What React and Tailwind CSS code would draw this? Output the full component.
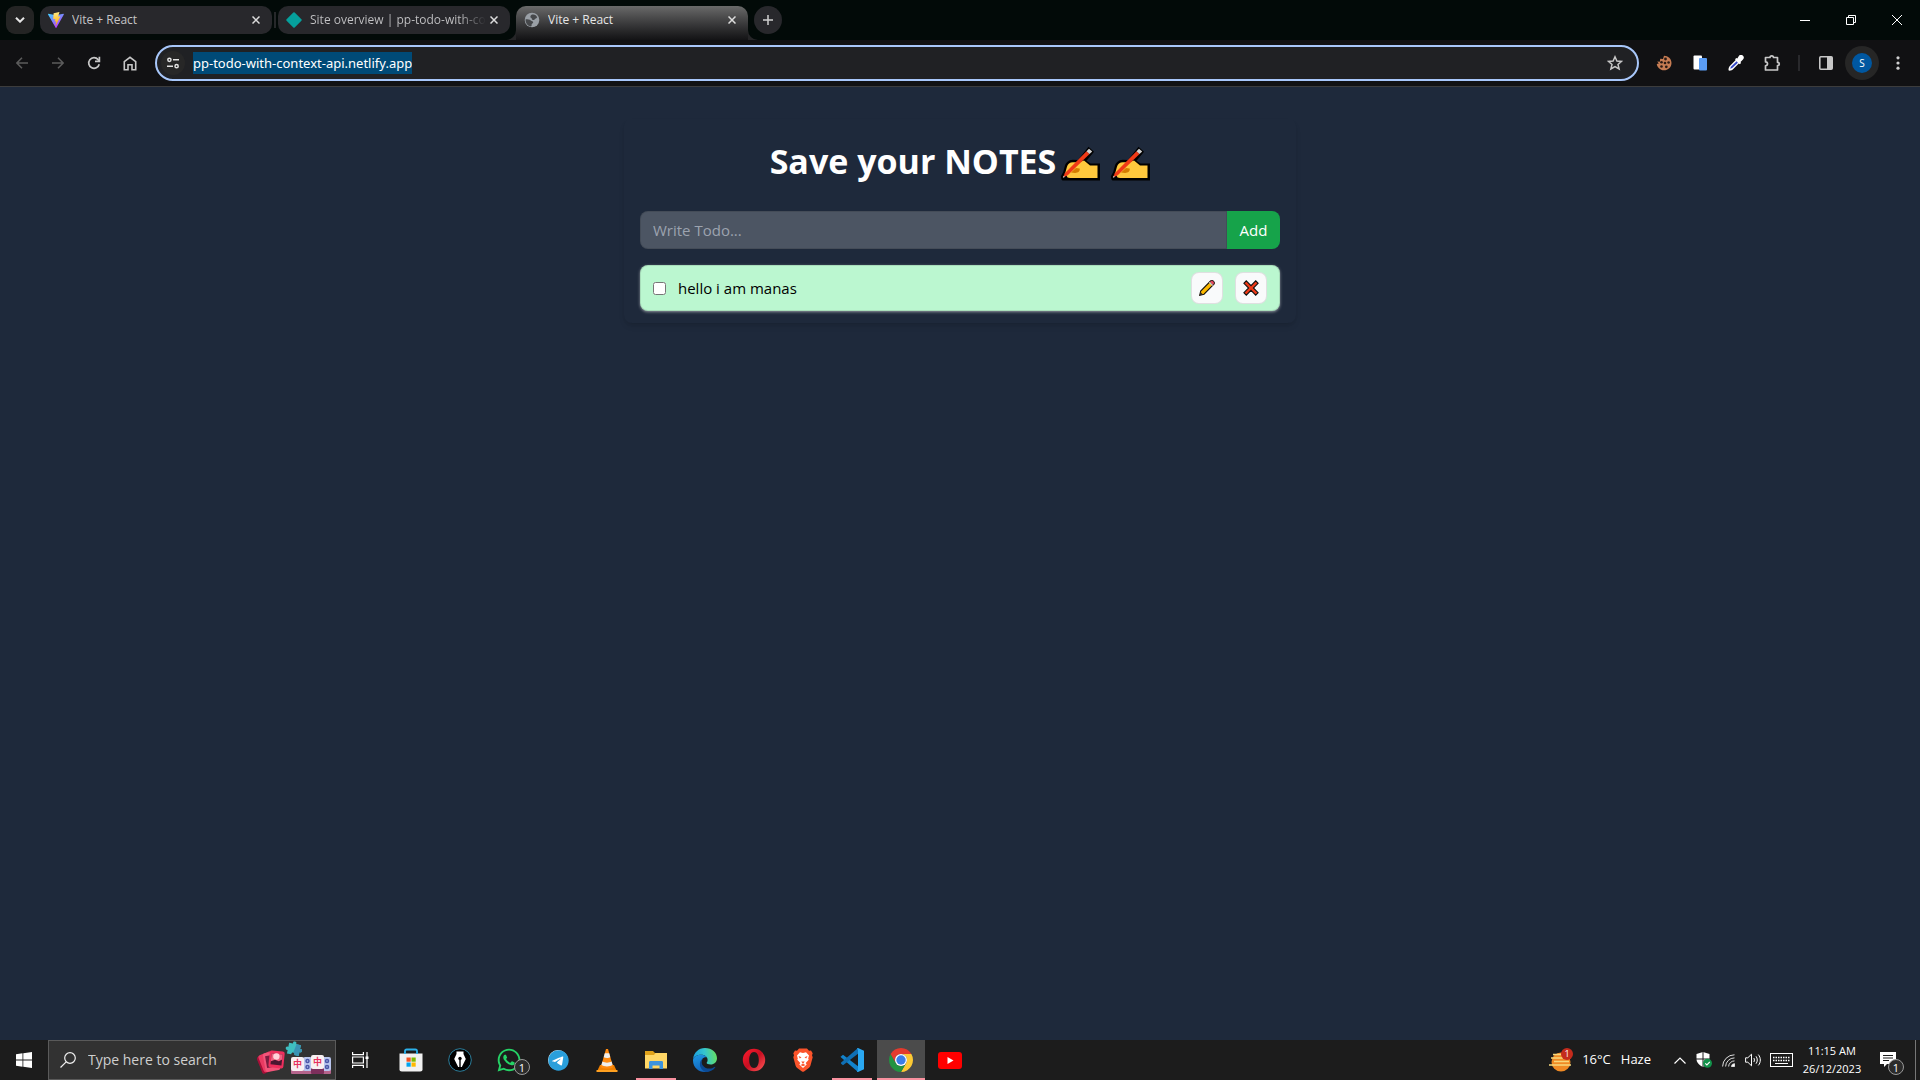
import { FaTelegram, FaWhatsapp } from "react-icons/fa6";

const ui = "font-['Open_Sans','Noto_Sans',sans-serif]";

function CloseX() {
  return (
    <svg viewBox="0 0 8 8" className="size-2" stroke="currentColor" strokeWidth="1.5">
      <path d="M.5.5l7 7M7.5.5l-7 7" />
    </svg>
  );
}

function ViteIcon() {
  return (
    <svg viewBox="0 0 32 32" className="size-4 shrink-0">
      <defs>
        <linearGradient id="va" x1="0" y1="0" x2=".6" y2="1">
          <stop offset="0" stopColor="#41d1ff" />
          <stop offset="1" stopColor="#bd34fe" />
        </linearGradient>
        <linearGradient id="vb" x1=".4" y1="0" x2=".5" y2="1">
          <stop offset="0" stopColor="#ffea83" />
          <stop offset="1" stopColor="#ffa800" />
        </linearGradient>
      </defs>
      <path d="M31.7 4.8L16.8 31.4c-.3.6-1.100.6-1.500 0L.1 4.800c-.3-.6.2-1.300.9-1.200l14.900 2.700 14.800-2.700c.8-.1 1.300.6 1 1.200z" fill="url(#va)" />
      <path d="M22.500.1l-11 2.200a.4.4 0 0 0-.3.400l-.7 11.400c0 .3.200.5.500.4l3-.7c.3 0 .6.200.5.500l-1 4.500c0 .3.200.6.500.5l1.900-.6c.3 0 .6.200.5.500l-1.400 7c-.1.400.5.700.8.300l8.800-17.700c.1-.2-.1-.6-.5-.5l-3.100.6c-.3 0-.5-.2-.5-.5l2.300-7.800c.100-.3-.1-.6-.4-.5z" fill="url(#vb)" />
    </svg>
  );
}

function GlobeIcon() {
  return (
    <svg viewBox="0 0 16 16" className="size-4 shrink-0">
      <circle cx="8" cy="8" r="7.3" fill="#9aa0a6" />
      <path d="M8.200 2.600c2.200-.6 4.300.6 5 2.600-.7 1.600-1.800 1-2.600 2.200s-2.600.8-2.800-.6-1.600-.6-1.400-2 1-1.800 1.800-2.200z" fill="#46484b" />
      <path d="M1.600 7.200c2 0 4.200.2 5.200 1.200s2.400.6 2.400 1.800-1.600 1.200-1.600 2.400.2 1.400-.6 2C3.500 14 1.300 10.800 1.600 7.200z" fill="#46484b" />
    </svg>
  );
}

function Tab({ title, icon, active, fade }) {
  return (
    <div
      className={
        active
          ? "relative flex h-[34px] w-[232px] items-start rounded-t-[10px] bg-gradient-to-b from-[#6a6a6a] to-[#131315] px-2 text-[#e6e6e6]"
          : "relative flex h-7 w-[232px] items-start rounded-[10px] bg-[#28282c] px-2 text-[#c4c4c6]"
      }
    >
      {active && (
        <>
          <svg viewBox="0 0 10 10" className="absolute bottom-0 -left-[10px] size-[10px]"><path d="M0 10A10 10 0 0 0 10 0V10z" fill="#252527" /></svg>
          <svg viewBox="0 0 10 10" className="absolute -right-[10px] bottom-0 size-[10px]"><path d="M10 10A10 10 0 0 1 0 0V10z" fill="#252527" /></svg>
        </>
      )}
      <div className="flex h-7 w-full items-center">
        {icon}
        <span className={fade ? "ml-2 min-w-0 flex-1 overflow-hidden bg-gradient-to-r from-[#c4c4c6] from-85% to-[#28282c] bg-clip-text text-xs leading-5 whitespace-nowrap text-transparent" : "ml-2 min-w-0 flex-1 overflow-hidden text-xs leading-5 whitespace-nowrap"}>{title}</span>
        <button aria-label="Close tab" className="flex size-4 items-center justify-center text-[#dcdcdc]"><CloseX /></button>
      </div>
    </div>
  );
}

function IconButton({ label, children }) {
  return (
    <button aria-label={label} className="flex h-9 w-9 shrink-0 items-center justify-center">
      {children}
    </button>
  );
}

function TabStrip() {
  return (
    <header className="flex h-10 items-start bg-[#020a08] pl-1.5">
      <button aria-label="Search tabs" className="mt-1.5 mr-1.5 flex size-7 items-center justify-center rounded-[9px] bg-[#242424]">
        <svg viewBox="0 0 10 6" className="h-1.5 w-2.5" fill="none" stroke="#e6e6e6" strokeWidth="2"><path d="M1 .7l4 4 4-4" /></svg>
      </button>
      <nav className="mt-1.5 flex items-start">
        <Tab title="Vite + React" icon={<ViteIcon />} />
        <span className="mx-0.5 mt-1.5 h-4 w-0.5 bg-[#26282a]" />
        <Tab
          title="Site overview | pp-todo-with-co"
          fade
          icon={<svg viewBox="0 0 16 16" className="size-4 shrink-0"><path d="M7.300.6a1 1 0 0 1 1.400 0l6.700 6.700a1 1 0 0 1 0 1.400l-6.700 6.700a1 1 0 0 1-1.400 0L.6 8.700a1 1 0 0 1 0-1.400z" fill="#05a09c" /></svg>}
        />
        <span className="w-1.5" />
        <Tab title="Vite + React" icon={<GlobeIcon />} active />
      </nav>
      <button aria-label="New tab" className="mt-1.5 ml-1.5 flex size-7 items-center justify-center rounded-full bg-[#28282c]">
        <svg viewBox="0 0 10 10" className="size-2.5" stroke="#cfcfcf" strokeWidth="1.500"><path d="M5 0v10M0 5h10" /></svg>
      </button>
      <div className="ml-auto flex h-10 text-white">
        <button aria-label="Minimize" className="flex w-[46px] items-center justify-center">
          <svg viewBox="0 0 10 10" className="size-2.5" stroke="currentColor"><path d="M0 5.500h10" /></svg>
        </button>
        <button aria-label="Restore" className="flex w-[46px] items-center justify-center">
          <svg viewBox="0 0 10 10" className="size-2.5" fill="none" stroke="currentColor"><path d="M.5 2.500h7v7h-7zM2.500 2.500v-2h7v7h-2" /></svg>
        </button>
        <button aria-label="Close" className="flex w-[46px] items-center justify-center">
          <svg viewBox="0 0 10 10" className="size-2.5" stroke="currentColor"><path d="M0 0l10 10M10 0L0 10" /></svg>
        </button>
      </div>
    </header>
  );
}

function Toolbar() {
  return (
    <div className="flex h-[47px] items-center border-b border-[#3c3c3c] bg-[#111113] pr-1 pl-1">
      <IconButton label="Back">
        <svg viewBox="0 0 12 12" className="size-3" fill="none" stroke="#5c5c5c" strokeWidth="1.500"><path d="M12 6H1M6 .8L.9 6 6 11.200" /></svg>
      </IconButton>
      <IconButton label="Forward">
        <svg viewBox="0 0 12 12" className="size-3" fill="none" stroke="#5c5c5c" strokeWidth="1.500"><path d="M0 6h11M6 .8L11.100 6 6 11.200" /></svg>
      </IconButton>
      <IconButton label="Reload">
        <svg viewBox="0 0 14 14" className="size-3.5" fill="none" stroke="#c7c7c7" strokeWidth="1.700"><path d="M12.200 8.200A5.300 5.300 0 1 1 11.100 3.600L12.500 5" /><path d="M12.400.8V5.300H8" /></svg>
      </IconButton>
      <IconButton label="Home">
        <svg viewBox="0 0 14 15" className="h-[15px] w-3.5" fill="none" stroke="#c7c7c7" strokeWidth="1.600"><path d="M1.300 13.700V5.600L7 1.300l5.700 4.300v8.100H9V8.800H5v4.900z" /></svg>
      </IconButton>
      <div className="ml-[7px] flex h-9 flex-1 items-center rounded-full border-2 border-[#a8c7fa] bg-[#202124] pl-1">
        <button aria-label="View site information" className="flex size-6 items-center justify-center rounded-full bg-[#272727]">
          <svg viewBox="0 0 12 12" className="size-3" fill="none" stroke="#e3e3e3" strokeWidth="1.500"><circle cx="2.400" cy="2.800" r="1.600" /><path d="M6 2.800h6M0 9.200h6" /><circle cx="9.600" cy="9.200" r="1.600" /></svg>
        </button>
        <div className="flex flex-1 pl-2">
          <input aria-label="Address" readOnly defaultValue="pp-todo-with-context-api.netlify.app" className="field-sizing-content h-[22px] bg-[#004a77] font-['Noto_Sans','Open_Sans',sans-serif] text-[13px] leading-[22px] text-white outline-none" />
        </div>
        <button aria-label="Bookmark this tab" className="mr-[14px] flex size-4 items-center justify-center">
          <svg viewBox="0 0 16 16" className="size-4" fill="none" stroke="#c7c7c7" strokeWidth="1.500"><path d="M8 1.800l1.900 4.200 4.600.4-3.500 3 1.100 4.500L8 11.500l-4.100 2.400L5 9.400 1.500 6.400l4.600-.4z" /></svg>
        </button>
      </div>
      <div className="ml-[7px] flex items-center">
        <IconButton label="Cookie editor">
          <svg viewBox="0 0 16 16" className="size-4"><path d="M8 .7c4 0 7.500 3 7.500 7.300S12 15.300 8 15.300 1 12 .8 9l2-.4L1.200 6.400l2.600.3.400-3L7 4z" fill="#c67c53" /><g fill="#2a1a14"><circle cx="9.500" cy="4" r="1.400" /><circle cx="5.500" cy="7.300" r="1.300" /><circle cx="9" cy="8" r="1.300" /><circle cx="12.600" cy="7.500" r="1.300" /><circle cx="5.500" cy="11.500" r="1.300" /><circle cx="10.300" cy="11.800" r="1.400" /></g></svg>
        </IconButton>
        <IconButton label="Copy extension">
          <svg viewBox="0 0 14 16" className="h-4 w-3.5"><rect x=".5" y=".5" width="8.500" height="14" rx="1" fill="#fff" /><rect x="6" y="3" width="8" height="12.500" rx="1" fill="#5b9df5" /></svg>
        </IconButton>
        <IconButton label="Color picker">
          <svg viewBox="0 0 16 16" className="size-4"><path d="M11 .8a2.500 2.500 0 0 1 4 3.600L12.500 7l.6 1-1.400 1.300-.9-.7-6.300 6.100c-.8.700-3.700 1.400-3.900.6-.3-.8.200-3.300 1-4.100l6.100-6.100L7 4.200l1.300-1.300 1 .5z" fill="#fff" /><path d="M8.600 6.300l1.300 1.400L4.200 13l-2 .7.700-2z" fill="#3347c8" /></svg>
        </IconButton>
        <IconButton label="Extensions">
          <svg viewBox="0 0 18 18" className="size-[18px]" fill="none" stroke="#c7c7c7" strokeWidth="1.700"><path d="M2.500 3.500H7c0-2.300 3.500-2.300 3.500 0h4v4.800c2.400 0 2.400 3.200 0 3.200v4.500h-12v-4.200c2.700-.3 2.700-3.600 0-3.900z" strokeLinejoin="round" /></svg>
        </IconButton>
        <span className="mx-2 h-4 w-0.5 bg-[#29292c]" />
        <IconButton label="Side panel">
          <svg viewBox="0 0 14 14" className="size-3.5"><rect x=".8" y=".8" width="12.400" height="12.400" rx="1" fill="none" stroke="#c7c7c7" strokeWidth="1.600" /><path d="M8 1h5v12H8z" fill="#c7c7c7" /></svg>
        </IconButton>
        <IconButton label="Profile">
          <span className="flex size-[34px] shrink-0 items-center justify-center rounded-full bg-[#262626]">
            <span className="flex size-5 items-center justify-center rounded-full bg-[#0057a0] text-[10px] text-white">S</span>
          </span>
        </IconButton>
        <IconButton label="Menu">
          <svg viewBox="0 0 4 14" className="h-3.5 w-1" fill="#d0d0d0"><circle cx="2" cy="1.800" r="1.600" /><circle cx="2" cy="7" r="1.600" /><circle cx="2" cy="12.200" r="1.600" /></svg>
        </IconButton>
      </div>
    </div>
  );
}

function WritingHand() {
  return (
    <svg viewBox="0 0 40 35" className="h-[35px] w-10" role="img" aria-label="writing hand">
      <path d="M1.500 33.500L.8 30.500 3.200 26l1.500-5.500c1-4 4-6.500 8-6.700l5.300.2L28.500.8 34 5.800l-7.500 9 4 2.700H40v17H2.500z" fill="#000" />
      <path d="M7.500 31.500L5.200 27l1.700-6c.7-3 3-4.700 6-4.700h6L24 14.500l6 5h7.500V32H10z" fill="#ffc83d" />
      <path d="M11 26.500l5-4.500 3.700.6c.5 2.600-1.500 4.400-4.700 4.400z" fill="#d67d00" />
      <path d="M3 31.500l1.800-4.300L26.500 5.300l3 2.800L7.700 29.300z" fill="#f03a17" />
      <path d="M26.500 5.300l2.500-2.500 3.200 2.700-2.700 2.600z" fill="#d2d2d2" />
      <path d="M2.800 31.700l.8-2 1.400 1.200z" fill="#ccc" />
    </svg>
  );
}

function Pencil() {
  return (
    <svg viewBox="0 0 16 16" className="size-4">
      <path d="M.7 15.300l1-4.300L11.600 1c1.900-1.500 4.600 1.300 3.300 3.200L5 14.200z" fill="#fdb900" stroke="#17120c" strokeWidth="1.100" />
      <path d="M10.600 2l1-1c1.900-1.500 4.600 1.300 3.300 3.200l-1 1z" fill="#e8495f" stroke="#222" strokeWidth=".7" />
      <path d="M9.900 2.700l.9-.9L14 5l-.9.900z" fill="#c9c9c9" />
      <path d="M.7 15.300l.8-3.300 2.500 2.500z" fill="#332c26" />
    </svg>
  );
}

function Cross() {
  return (
    <svg viewBox="0 0 16 16" className="size-4">
      <path d="M3.300.9L8 5.600 12.700.9l2.400 2.400L10.400 8l4.700 4.700-2.400 2.400L8 10.400l-4.700 4.700-2.400-2.400L5.600 8 .9 3.300z" fill="#f03a17" stroke="#101010" strokeWidth="1.100" />
    </svg>
  );
}

function TodoPage() {
  return (
    <main className="flex-1 bg-[#1e293b] py-8">
      <section className="mx-auto w-full max-w-2xl rounded-lg px-4 py-3 shadow-md">
        <h1 className="mt-2 mb-8 flex h-10 items-center justify-center pt-1 text-[34px] leading-10 font-bold text-white">
          <span className="mr-1">Save your NOTES</span>
          <span className="flex gap-[10px] pt-1"><WritingHand /><WritingHand /></span>
        </h1>
        <form className="mb-4 flex" onSubmit={(e) => e.preventDefault()}>
          <input aria-label="Todo" placeholder="Write Todo..." className="min-w-0 flex-1 rounded-l-lg border border-black/10 bg-[#4c5563] px-3 py-1.5 text-[15px] leading-6 outline-none placeholder:text-[#9ca3af]" />
          <button className="w-[53px] rounded-r-lg bg-[#16a34a] text-[15px] text-white">Add</button>
        </form>
        <div className="flex items-center gap-3 rounded-lg border border-black/10 bg-[#bbf7d0] px-3 py-1.5 shadow-[0_1px_3px_rgba(255,255,255,0.5)]">
          <input id="todo-1" type="checkbox" />
          <label htmlFor="todo-1" className="flex-1 text-[15px] leading-6 text-black">hello i am manas</label>
          <button aria-label="Edit" className="flex size-8 items-center justify-center rounded-lg border border-black/10 bg-gray-50"><Pencil /></button>
          <button aria-label="Delete" className="flex size-8 items-center justify-center rounded-lg border border-black/10 bg-gray-50"><Cross /></button>
        </div>
      </section>
    </main>
  );
}

function TaskButton({ label, state, children }) {
  return (
    <button aria-label={label} className={state === "active" ? "relative flex h-10 w-12 items-center justify-center bg-[#4b4b4b]" : "relative flex h-10 w-12 items-center justify-center"}>
      {children}
      {state === "active" && <span className="absolute inset-x-0 bottom-0 h-0.5 bg-[#f8919f]" />}
      {state === "open" && <span className="absolute inset-x-1 bottom-0 h-0.5 bg-[#f8919f]" />}
    </button>
  );
}

function SearchArt() {
  return (
    <svg viewBox="0 0 76 38" className="h-[38px] w-[76px] shrink-0">
      <g transform="rotate(-22 10 22)"><rect x="2" y="13" width="14" height="18" rx="2" fill="#a80f38" /><rect x="4" y="12" width="14" height="18" rx="2" fill="#e93a62" /></g>
      <g transform="rotate(-10 15 20)"><rect x="7" y="11" width="15" height="19" rx="2" fill="#f2557a" /><rect x="9" y="14" width="10" height="12" fill="#7a1c40" /></g>
      <g transform="rotate(6 20 19)"><rect x="12" y="10" width="15" height="17" rx="2" fill="#ee2f5d" /><path d="M14 13h11v11H14z" fill="#4b1631" /><path d="M14 13h11v5l-3 2-4-1-4 2z" fill="#f0607f" /><circle cx="19" cy="15.500" r="3.200" fill="#ffd2da" /></g>
      <g transform="rotate(12 38 8)"><path d="M31 3h4c-1.500-3 4.500-3 3 0h5v4c3-1.500 3 4.500 0 3v4h-4.500c1-3-4-3-3 0H31v-3.500c-3 1-3-4.500 0-3z" fill="#3fbfc0" /><path d="M38.500 3H43v4c3-1.500 3 4.500 0 3v4h-4.500c.4-1.400-.5-2.200-1.500-2.300z" fill="#3a93b4" /></g>
      <rect x="34" y="27" width="40" height="6" rx="1" fill="#b5648c" />
      <rect x="46" y="16" width="9" height="14" rx="2" fill="#b9c5ee" /><rect x="65" y="16" width="9" height="14" rx="2" fill="#b9c5ee" />
      <g fill="none" stroke="#4a56a8" strokeWidth="1.500"><circle cx="50.500" cy="20" r="1.500" /><circle cx="50.500" cy="26" r="1.500" /><circle cx="70" cy="20" r="1.500" /><circle cx="70" cy="26" r="1.500" /></g>
      <rect x="34" y="16" width="13" height="14" rx="2" fill="#f8f0f2" />
      <rect x="54" y="27" width="13" height="6" rx="1" fill="#7d2f5c" /><rect x="54" y="14" width="13" height="14" rx="2" fill="#f8f0f2" />
      <g fontFamily="Noto Sans CJK SC, sans-serif" fontSize="9" fontWeight="700" fill="#e5315c" textAnchor="middle"><text x="40.500" y="26">中</text><text x="60.500" y="24">中</text></g>
    </svg>
  );
}

function ChromeLogo() {
  const d = "M12 6H22.390A12 12 0 0 1 12 24L17.200 15A6 6 0 0 0 12 6Z";
  return (
    <svg viewBox="0 0 24 24" className="size-6">
      <path d={d} fill="#fcc934" />
      <path d={d} fill="#229342" transform="rotate(120 12 12)" />
      <path d={d} fill="#e33b2e" transform="rotate(240 12 12)" />
      <circle cx="12" cy="12" r="6" fill="#fff" />
      <circle cx="12" cy="12" r="4.700" fill="#3a7de8" />
    </svg>
  );
}

function EdgeLogo() {
  return (
    <svg viewBox="0 0 24 24" className="size-6">
      <defs>
        <linearGradient id="edge-top" x1="0" y1=".5" x2="1" y2=".4">
          <stop offset="0" stopColor="#1a9fe0" />
          <stop offset=".5" stopColor="#35c5cf" />
          <stop offset="1" stopColor="#66e05f" />
        </linearGradient>
        <linearGradient id="edge-left" x1=".3" y1="0" x2=".6" y2="1">
          <stop offset="0" stopColor="#1c95e2" />
          <stop offset="1" stopColor="#1262b8" />
        </linearGradient>
      </defs>
      <path d="M.1 11C.6 4.800 5.600 0 12 0c7 0 12 4.800 12 10.200 0 3.800-2.900 6.300-6.300 6.300-2.500 0-4.100-.8-4.100-1.700 0-.6 1-1 1-2.900 0-3-2.800-5.200-6.300-5.200C4.200 6.700 1 8.500.1 11z" fill="url(#edge-top)" />
      <path d="M.1 11.300C1 8.400 4.300 6.700 8.300 6.700c2.400 0 4.500 1 5.500 2.700-2.800-.4-5.600 1.400-5.600 5.400 0 4.200 3.300 8 7.600 8.400C8.500 26 0 21 0 12.500z" fill="url(#edge-left)" />
      <path d="M10.100 10.800c-2.900 2.500-1.600 8.200 4.200 9.600 3 .7 5.500-.5 7.300-1.500.5-.3.900.2.600.6C20.200 22.400 16.500 24 13 24c-4-1.300-6.300-4.700-6.100-8.300.1-2.500 1.300-4.100 3.200-4.900z" fill="#0b4a94" />
    </svg>
  );
}

function Badge() {
  return <span className="flex size-4 items-center justify-center rounded-full border border-[#9a9a9a] bg-[#2b2b2b] text-[11px] leading-none text-white">1</span>;
}

function Taskbar() {
  return (
    <footer className="flex h-10 bg-[#1c1c1c] text-white">
      <button aria-label="Start" className="flex h-10 w-12 items-center justify-center">
        <svg viewBox="0 0 16 16" className="size-4" fill="#fff"><path d="M0 2.200L6.500 1.300V7.600H0zM7.300 1.200L16 0v7.600H7.300zM0 8.400h6.500v6.300L0 13.800zM7.300 8.400H16V16l-8.700-1.200z" /></svg>
      </button>
      <label className="flex h-10 w-[288px] items-center border border-[#5a5a5a] bg-[#323232] pr-0.5 pl-[11px]">
        <svg viewBox="0 0 16 16" className="size-4 shrink-0" fill="none" stroke="#f0f0f0" strokeWidth="1.200"><circle cx="10" cy="6" r="5.300" /><path d="M6.200 9.800L.5 15.500" /></svg>
        <input aria-label="Search" placeholder="Type here to search" className="ml-3 min-w-0 flex-1 bg-transparent text-sm outline-none placeholder:text-[#cfcfcf]" />
        <SearchArt />
      </label>
      <div className="mr-[3px] flex">
        <TaskButton label="Task view">
          <svg viewBox="0 0 17 16" className="h-4 w-[17px]" fill="none" stroke="#fff" strokeWidth="1.200"><path d="M.6 0v2.600h10.800V0M.6 16v-2.600h10.800V16M.6 5h10.800v6H.6zM15 0v16" /><path d="M13.500 4.500h3v2.500h-3z" fill="#fff" stroke="none" /></svg>
        </TaskButton>
      </div>
      <div className="flex gap-px">
        <TaskButton label="Microsoft Store">
          <svg viewBox="0 0 24 24" className="size-6"><path d="M.5 5.500h23v15.700c0 1.300-.8 2.300-2.300 2.300H2.800C1.300 23.500.5 22.500.5 21.200z" fill="#f1f1f1" /><path d="M7.500 9.500h4.200v4.200H7.500z" fill="#f25022" /><path d="M12.500 9.500h4.200v4.200h-4.200z" fill="#7fba00" /><path d="M7.500 14.500h4.200v4.200H7.500z" fill="#00a4ef" /><path d="M12.500 14.500h4.200v4.200h-4.200z" fill="#ffb900" /><path d="M6 6V3.200c0-1 .6-1.700 1.600-1.700h8.800c1 0 1.600.7 1.600 1.700V6" fill="none" stroke="#2cb1ea" strokeWidth="1.800" /></svg>
        </TaskButton>
        <TaskButton label="Pen app">
          <svg viewBox="0 0 24 24" className="size-6"><circle cx="12" cy="12" r="11.300" fill="#000" stroke="#2e7f9c" /><path d="M8.500 3.500h7v2.500l2.300 5L13.800 19h-3.600L6.200 11l2.300-5z" fill="#fff" /><path d="M12 19v-7" stroke="#000" strokeWidth="1.400" /><circle cx="12" cy="10.500" r="1.700" fill="#000" /></svg>
        </TaskButton>
        <TaskButton label="WhatsApp">
          <FaWhatsapp className="size-[26px] text-[#25d366]" />
          <span className="absolute top-[19px] right-[3px]"><Badge /></span>
        </TaskButton>
        <TaskButton label="Telegram">
          <span className="flex size-5 items-center justify-center rounded-full bg-white"><FaTelegram className="size-[21px] shrink-0 text-[#2a9fdb]" /></span>
        </TaskButton>
        <TaskButton label="VLC media player">
          <svg viewBox="0 0 22 24" className="h-6 w-[22px]"><path d="M4 17h14l2.800 6.300H1.200z" fill="#f08000" /><path d="M10 1h2l5.200 18c-2 2-10.400 2-12.400 0z" fill="#ff8a10" /><path d="M8.800 5.200h4.400l1.100 4c-1.500 1-5 1-6.600 0zM6.400 13.500c2.500 1.500 6.700 1.500 9.200 0l1 3.600c-2.600 1.700-8.600 1.700-11.200 0z" fill="#eee" /><path d="M.5 22h21v2H.5z" fill="#ffa020" /></svg>
        </TaskButton>
        <TaskButton label="File Explorer" state="open">
          <svg viewBox="0 0 22 20" className="h-5 w-[22px]"><path d="M0 1h8l2 2h12v15H0z" fill="#e0a21a" /><path d="M0 5h9l1.500-2H22v15.500H0z" fill="#ffd766" /><path d="M4 19v-6.500c0-1 .5-1.500 1.500-1.500h11c1 0 1.500.5 1.500 1.500V19h-3.500v-3.500h-7V19z" fill="#3d93dc" /></svg>
        </TaskButton>
        <TaskButton label="Microsoft Edge"><EdgeLogo /></TaskButton>
        <TaskButton label="Opera">
          <svg viewBox="0 0 24 24" className="size-6"><defs><linearGradient id="op" x1="0" y1="0" x2="1" y2="1"><stop offset="0" stopColor="#ff1b2d" /><stop offset=".5" stopColor="#c80f22" /><stop offset="1" stopColor="#ff5a5a" /></linearGradient></defs><path fillRule="evenodd" d="M12 .8a11.200 11.200 0 1 1 0 22.400A11.200 11.200 0 0 1 12 .8zM12 4C9 4 7.200 7.500 7.200 12S9 20 12 20s4.800-3.500 4.800-8S15 4 12 4z" fill="url(#op)" /></svg>
        </TaskButton>
        <TaskButton label="Brave">
          <svg viewBox="0 0 20 24" className="h-6 w-5"><path d="M6 .5h8l2 2.200 2-.2 1.700 2.700-.7 2 .7 2-2.300 8.500c-.3 1-.8 1.700-1.600 2.300L11 23.500c-.6.400-1.400.4-2 0L4.200 20c-.8-.6-1.300-1.300-1.600-2.300L.3 9.200l.7-2-.7-2L2 2.500l2 .2z" fill="#fb542b" /><path d="M10 5l3-.7 3 3.200-.8 3 .5 1.200-3 3.200 1 1.700L10 20l-3.700-3.400 1-1.700-3-3.200.5-1.200-.8-3L7 4.300z" fill="#fff" /><path d="M5.500 8l3 1.200-1.700 1.300zM14.500 8l-3 1.200 1.700 1.300zM8.300 13.500h3.400L10 16zM7.500 17l2.500-1.300 2.500 1.300L10 18.200z" fill="#fb542b" /></svg>
        </TaskButton>
        <TaskButton label="Visual Studio Code" state="open">
          <svg viewBox="0 0 24 24" className="size-6"><path d="M1.200 8.300L3 6.700l15 11.500V24L.9 9.200z" fill="#1283cc" /><path d="M1.200 15.700L3 17.300 18 5.800V0L.9 14.800z" fill="#0f6fb4" /><path d="M17 .2L18 0l6 2.800v18.400L18 24l-1.200-.3L18 22V2z" fill="#2aa8f2" /></svg>
        </TaskButton>
        <TaskButton label="Google Chrome" state="active"><ChromeLogo /></TaskButton>
        <TaskButton label="YouTube">
          <svg viewBox="0 0 24 17" className="h-[17px] w-6"><rect width="24" height="17" rx="3" fill="#f00" /><path d="M9.500 5l6 3.500-6 3.500z" fill="#fff" /></svg>
        </TaskButton>
      </div>
      <div className="ml-auto flex items-center">
        <button className="flex items-center text-[13px]">
          <svg viewBox="0 0 26 24" className="mr-2 h-6 w-[26px]"><circle cx="13" cy="14" r="9.500" fill="#f08a24" /><path d="M5 6.500h8M3 10h12M6 13.500h15M1 17h22" stroke="#f7d77b" strokeWidth="1.700" /><circle cx="19" cy="6" r="6" fill="#c42b1c" /><text x="19" y="9" fontSize="9" fill="#fff" textAnchor="middle">1</text></svg>
          <span className="mr-[10px]">16°C</span><span>Haze</span>
        </button>
        <div className="ml-[23px] flex items-center gap-[10px]">
          <button aria-label="Show hidden icons"><svg viewBox="0 0 12 7" className="h-[7px] w-3" fill="none" stroke="#fff" strokeWidth="1.200"><path d="M.5 6.500L6 1l5.500 5.500" /></svg></button>
          <svg viewBox="0 0 16 16" className="size-4"><path d="M7 0l6.500 2v5c0 3.500-2.500 6-6.500 8C3 13 .5 10.500.5 7V2z" fill="#fff" /><path d="M7 0v15M0 7h14" stroke="#1c1c1c" strokeWidth="1" /><circle cx="11.500" cy="11.300" r="4.500" fill="#12924a" /><path d="M9.300 11.300l1.600 1.600 2.900-3" stroke="#fff" fill="none" strokeWidth="1.100" /></svg>
          <svg viewBox="0 0 13 13" className="size-[13px]" fill="none" stroke="#dcdcdc"><path d="M.6 12.500A11.900 11.900 0 0 1 12.500.8M3.600 12.500A8.900 8.900 0 0 1 12.500 3.900M6.600 12.500a5.900 5.900 0 0 1 5.900-5.600" /><path d="M9.500 12.500a3 3 0 0 1 3-2.800v2.800z" fill="#fff" /></svg>
          <svg viewBox="0 0 17 14" className="h-3.5 w-[17px]" fill="none" stroke="#fff"><path d="M.6 4.800h2.200L6.500 1.200v11.600L2.800 9.200H.6z" /><path d="M8.800 5c.8 1.100.8 2.900 0 4M11 3.300c1.700 2 1.700 5.400 0 7.400M13.300 1.600c2.700 3 2.700 7.800 0 10.800" /></svg>
          <svg viewBox="0 0 23 14" className="-ml-0.5 h-3.5 w-[23px]" fill="none" stroke="#fff"><rect x=".5" y=".5" width="22" height="13" /><path d="M3 4.500h17M3 7.500h17" strokeDasharray="1.500 1" strokeWidth="1.300" /><path d="M5 10.500h13" /></svg>
        </div>
        <div className="ml-[9px] w-[60px] text-center text-[11px] leading-[18px] whitespace-nowrap">
          <div>11:15 AM</div>
          <div>26/12/2023</div>
        </div>
        <button aria-label="Notifications" className="relative ml-4 h-10 w-[37px]">
          <svg viewBox="0 0 16 15" className="absolute top-3 left-0.5 h-[15px] w-4"><path d="M0 0h16v12H7l-3 3v-3H0z" fill="#fff" /><path d="M3 3.500h10M3 6h10M3 8.500h6" stroke="#1c1c1c" /></svg>
          <span className="absolute top-[19px] left-[10px]"><Badge /></span>
        </button>
        <span className="mr-1 h-10 w-px bg-[#777]" />
      </div>
    </footer>
  );
}

export default function App() {
  return (
    <div className={"flex min-h-screen flex-col " + ui}>
      <TabStrip />
      <Toolbar />
      <TodoPage />
      <Taskbar />
    </div>
  );
}
